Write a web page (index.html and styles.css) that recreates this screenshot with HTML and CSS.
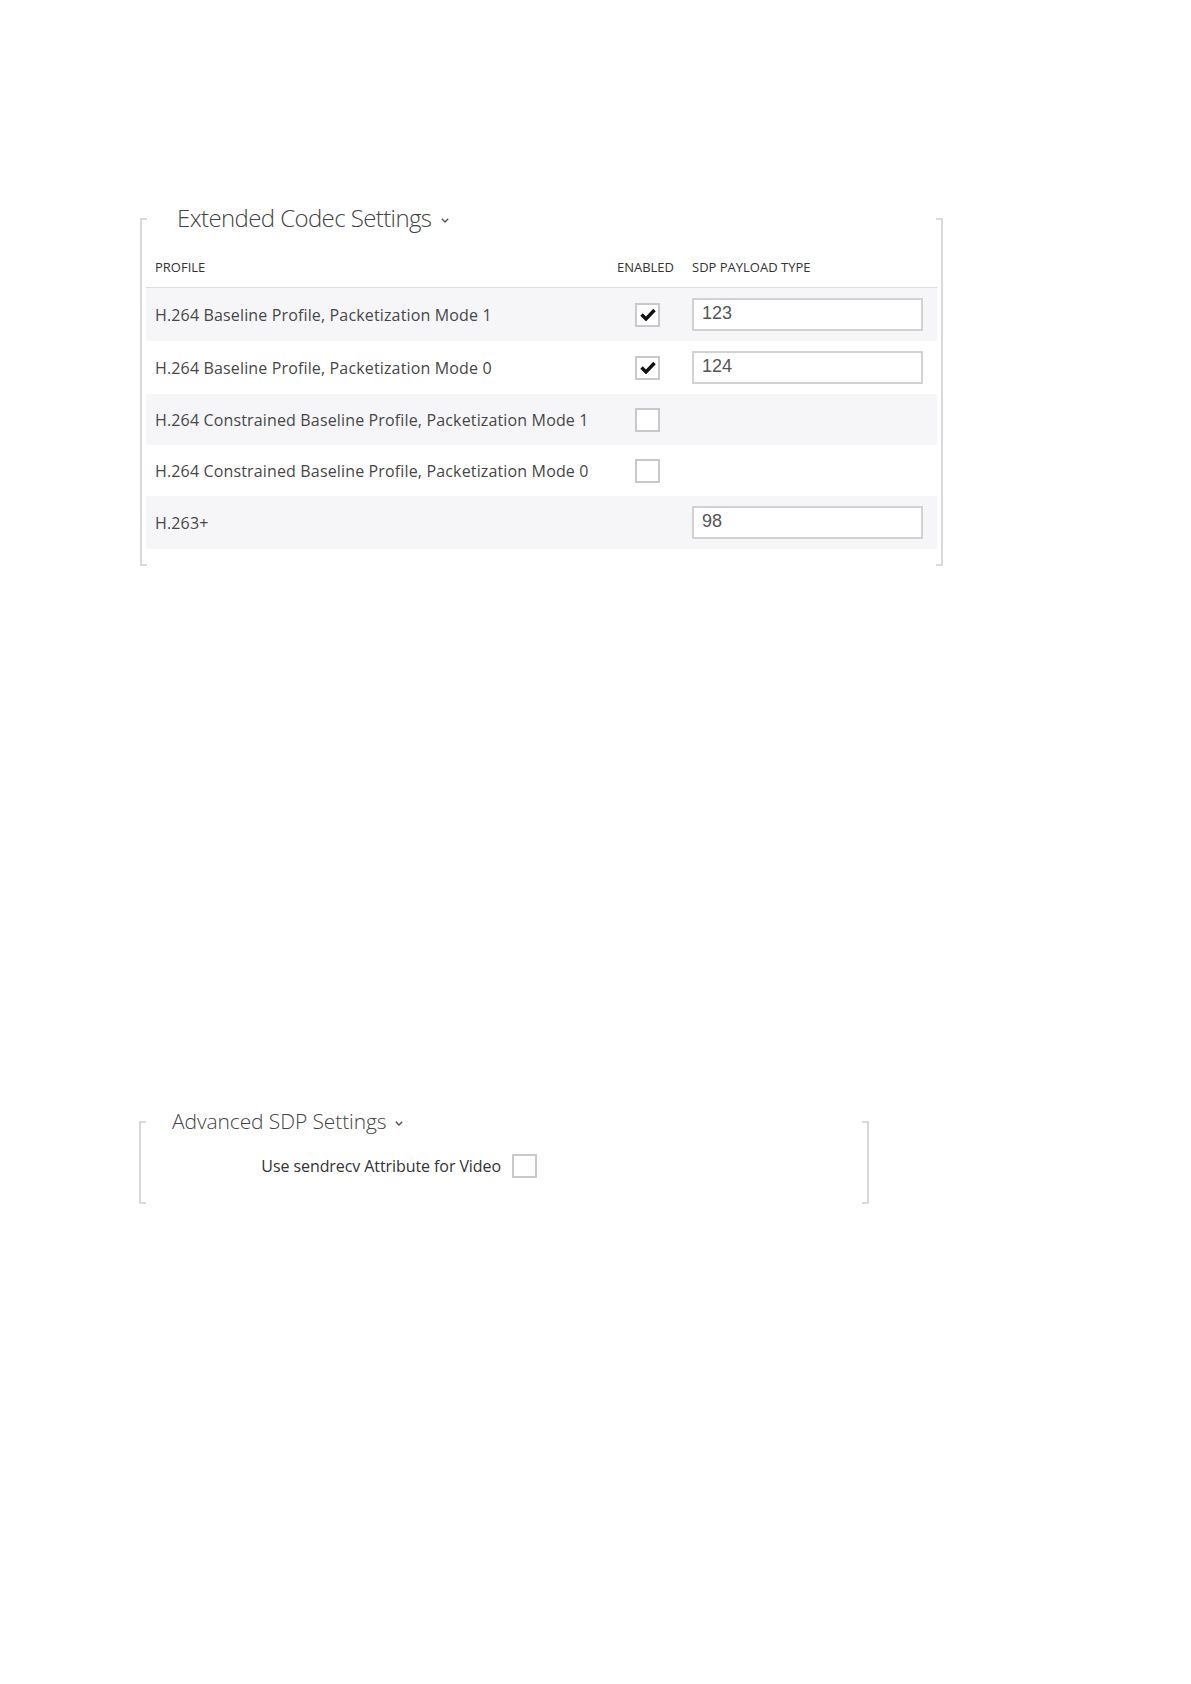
FILE: index.html
```html
<!DOCTYPE html>
<html lang="en">
<head>
    <meta charset="UTF-8">
    <meta name="viewport" content="width=device-width, initial-scale=1.0">
    <title>Video Codec Settings</title>
    <link rel="stylesheet" href="styles.css">
</head>
<body>

<section class="panel panel-codecs">
    <h2 class="panel-title">Extended Codec Settings
        <svg class="chevron" width="8" height="5" viewBox="0 0 8 5"><path d="M0.8 0.8 L4 4 L7.2 0.8" fill="none" stroke="#555" stroke-width="1.4"/></svg>
    </h2>

    <table class="codec-table">
        <colgroup>
            <col class="col-profile">
            <col class="col-enabled">
            <col class="col-payload">
        </colgroup>
        <thead>
            <tr>
                <th>Profile</th>
                <th class="center">Enabled</th>
                <th class="payload-head">SDP Payload Type</th>
            </tr>
        </thead>
        <tbody>
            <tr class="striped">
                <td>H.264 Baseline Profile, Packetization Mode 1</td>
                <td class="center"><span class="checkbox checked"><svg width="16" height="13" viewBox="0 0 16 13"><path d="M1.5 6.5 L6 11 L14.5 2" fill="none" stroke="#111" stroke-width="3.4"/></svg></span></td>
                <td class="payload-cell"><input class="payload" type="text" value="123"></td>
            </tr>
            <tr>
                <td>H.264 Baseline Profile, Packetization Mode 0</td>
                <td class="center"><span class="checkbox checked"><svg width="16" height="13" viewBox="0 0 16 13"><path d="M1.5 6.5 L6 11 L14.5 2" fill="none" stroke="#111" stroke-width="3.4"/></svg></span></td>
                <td class="payload-cell"><input class="payload" type="text" value="124"></td>
            </tr>
            <tr class="striped">
                <td>H.264 Constrained Baseline Profile, Packetization Mode 1</td>
                <td class="center"><span class="checkbox"></span></td>
                <td class="payload-cell"></td>
            </tr>
            <tr>
                <td>H.264 Constrained Baseline Profile, Packetization Mode 0</td>
                <td class="center"><span class="checkbox"></span></td>
                <td class="payload-cell"></td>
            </tr>
            <tr class="striped">
                <td>H.263+</td>
                <td class="center"></td>
                <td class="payload-cell"><input class="payload" type="text" value="98"></td>
            </tr>
        </tbody>
    </table>
</section>

<section class="panel panel-sdp">
    <h2 class="panel-title small">Advanced SDP Settings
        <svg class="chevron" width="8" height="5" viewBox="0 0 8 5"><path d="M0.8 0.8 L4 4 L7.2 0.8" fill="none" stroke="#555" stroke-width="1.4"/></svg>
    </h2>

    <div class="form-row">
        <label class="form-label">Use sendrecv Attribute for Video</label>
        <span class="checkbox"></span>
    </div>
</section>

</body>
</html>
```

FILE: styles.css
```css
body {
    font-family: "Open Sans", "Noto Sans", sans-serif;
    margin: 0;
    padding: 0;
    background-color: #fff;
    color: #474747;
}

/* bracket-style frame: side borders plus short ticks at the corners */
.panel {
    display: flex;
    flex-direction: column;
    box-sizing: border-box;
    border-left: 2px solid #d9d9d9;
    border-right: 2px solid #d9d9d9;
    background-image:
        linear-gradient(#d9d9d9, #d9d9d9),
        linear-gradient(#d9d9d9, #d9d9d9),
        linear-gradient(#d9d9d9, #d9d9d9),
        linear-gradient(#d9d9d9, #d9d9d9);
    background-size: 7px 2px;
    background-repeat: no-repeat;
    background-position: left top, right top, left bottom, right bottom;
    background-origin: border-box;
}

.panel-codecs {
    margin: 218px 0 0 140px;
    width: 803px;
    padding: 0 4px 17px 4px;
}

.panel-sdp {
    margin: 555px 0 0 139px;
    width: 730px;
    padding: 0 0 26px 0;
}

.panel-title {
    margin: -18px 0 12px 27px;
    font-size: 24px;
    font-weight: 300;
    letter-spacing: -0.6px;
    line-height: 36px;
    color: #444;
    background-color: #fff;
    align-self: flex-start;
    padding: 0 4px;
}

.panel-title.small {
    margin: -18px 0 0 27px;
    font-size: 21px;
    letter-spacing: -0.1px;
}

.chevron {
    vertical-align: middle;
    margin-left: 4px;
}

.panel-title.small .chevron {
    margin-left: 3px;
}

.codec-table {
    width: 791px;
    table-layout: fixed;
    border-collapse: collapse;
    font-size: 16px;
    letter-spacing: 0.15px;
}

.col-profile { width: 464px; }
.col-enabled { width: 75px; }
.col-payload { width: 252px; }

.codec-table th {
    font-size: 13px;
    font-weight: 400;
    letter-spacing: 0;
    text-transform: uppercase;
    text-align: left;
    color: #333;
    line-height: 18px;
    padding: 10px 0 11px 9px;
    border-bottom: 1px solid #dedede;
}

.codec-table td {
    height: 31px;
    padding: 10px 0 10px 9px;
    vertical-align: middle;
    white-space: nowrap;
}

.codec-table th.center {
    text-align: center;
    padding: 10px 4px 11px 0;
}

.codec-table td.center {
    text-align: center;
    padding-left: 0;
}

.codec-table th.payload-head,
.codec-table td.payload-cell {
    padding-left: 7px;
}

.striped td {
    background-color: #f6f6f8;
}

.checkbox {
    display: inline-flex;
    align-items: center;
    justify-content: center;
    box-sizing: border-box;
    width: 25px;
    height: 24px;
    border: 2px solid #c9c9c9;
    background-color: #fff;
    vertical-align: middle;
}

.payload {
    box-sizing: border-box;
    display: block;
    width: 231px;
    height: 33px;
    margin: 0;
    padding: 0 0 2px 8px;
    border: 2px solid #d2d2d2;
    background-color: #fff;
    font-family: "Liberation Sans", Arial, sans-serif;
    font-size: 18px;
    letter-spacing: 0;
    color: #555;
}

.form-row {
    display: grid;
    grid-template-columns: 360px 25px;
    column-gap: 11px;
    align-items: center;
    margin-top: 15px;
    font-size: 16px;
    letter-spacing: -0.08px;
}

.form-label {
    text-align: right;
    color: #333;
}
```
